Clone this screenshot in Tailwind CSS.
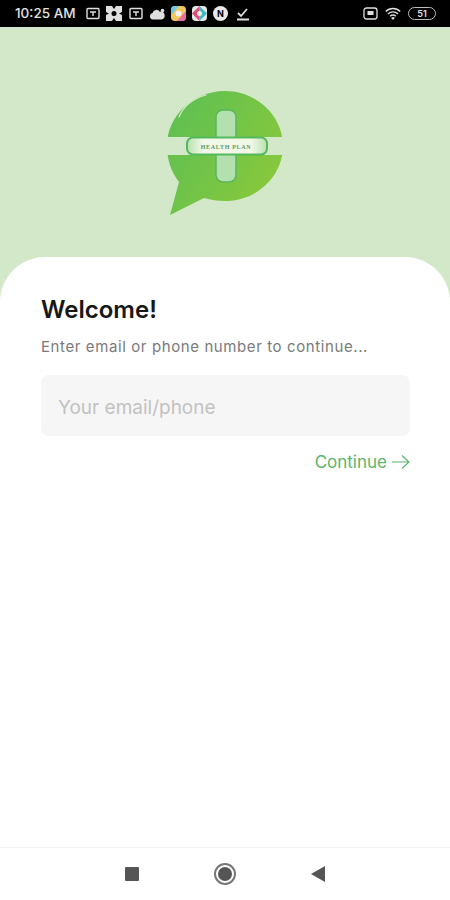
<!DOCTYPE html>
<html lang="en">
<head>
    <meta charset="UTF-8">
    <meta name="viewport" content="width=device-width, initial-scale=1.0">
    <title>Health Plan - Welcome</title>
    <script src="https://cdn.jsdelivr.net/npm/@tailwindcss/browser@4"></script>
</head>
<body class="bg-white font-['Inter',sans-serif]">
<div class="w-[450px] h-[900px] flex flex-col overflow-hidden bg-[#d2e8c8]">

    <!-- status bar -->
    <div class="h-[27px] shrink-0 bg-black text-[#e0e0e0] flex items-center pl-[15px] pr-[14px]">
        <span class="text-[13.5px] leading-none font-medium w-[71px] whitespace-nowrap">10:25 AM</span>
        <div class="flex items-center gap-[6px]">
            <svg class="w-[14px] h-[13px]" viewBox="0 0 14 13" fill="none" stroke="currentColor" stroke-width="1.400"><rect x="1" y="1.500" width="12" height="10" rx="1"/><path d="M4 5h6M7 5v4" /></svg>
            <svg class="w-[16px] h-[15px]" viewBox="0 0 16 15" fill="currentColor"><path d="M0 0h6l2 3 2-3h6v6l-3 1.500 3 1.500v6h-6l-2-3-2 3H0V9l3-1.500L0 6z"/><circle cx="8" cy="7.500" r="2.500" fill="#000"/></svg>
            <svg class="w-[14px] h-[13px] ml-[1px]" viewBox="0 0 14 13" fill="none" stroke="currentColor" stroke-width="1.400"><rect x="1" y="1.500" width="12" height="10" rx="1"/><path d="M4 5h6M7 5v4"/></svg>
            <svg class="w-[16px] h-[12px]" viewBox="0 0 16 12" fill="currentColor"><path d="M4 11.500a3.300 3.300 0 0 1-.5-6.500 4 4 0 0 1 7.300-1.300A3.800 3.800 0 0 1 12.500 11.500z"/><circle cx="13.500" cy="2.500" r="1.800"/></svg>
            <svg class="w-[15px] h-[15px]" viewBox="0 0 15 15"><rect width="15" height="15" rx="4" fill="#f0c95c"/><path d="M0 4a4 4 0 0 1 4-4h4L0 9z" fill="#6fc8ea"/><path d="M15 5v6a4 4 0 0 1-4 4H6z" fill="#e86aa8"/><circle cx="7.500" cy="7.500" r="3" fill="#f6eef6"/></svg>
            <svg class="w-[15px] h-[15px]" viewBox="0 0 15 15"><rect width="15" height="15" rx="4" fill="#e8e8e8"/><path d="M7.500 0L15 7.500 7.500 15z" fill="#3fb8c8"/><path d="M7.500 0L0 7.500 7.500 15z" fill="#e0487c"/><circle cx="7.500" cy="7.500" r="2.500" fill="#f4f0d8"/></svg>
            <span class="w-[15px] h-[15px] rounded-full bg-[#e8e8e8] text-black text-[9px] leading-[15px] font-bold text-center">N</span>
            <svg class="w-[12px] h-[14px] ml-[3px]" viewBox="0 0 12 14" fill="none" stroke="currentColor" stroke-width="1.800"><path d="M1 6l3 3 6-7M0 12.500h12"/></svg>
        </div>
        <div class="ml-auto flex items-center gap-[7px]">
            <svg class="w-[15px] h-[13px]" viewBox="0 0 15 13" fill="none" stroke="currentColor" stroke-width="1.300"><rect x="1" y="1" width="13" height="11" rx="2.500"/><rect x="4.500" y="4" width="6" height="4" fill="currentColor" stroke="none"/></svg>
            <svg class="w-[16px] h-[13px]" viewBox="0 0 16 13" fill="none" stroke="currentColor" stroke-width="1.400"><path d="M.8 4.500a10 10 0 0 1 14.400 0M3 7a7 7 0 0 1 10 0M5.200 9.300a3.800 3.800 0 0 1 5.600 0"/><path d="M8 13l-1.800-2a2.500 2.500 0 0 1 3.600 0z" fill="currentColor" stroke="none"/></svg>
            <span class="w-[28px] h-[13px] rounded-full border border-[#bdbdbd] text-[9px] leading-[11px] font-semibold text-center">51</span>
        </div>
    </div>

    <!-- logo area -->
    <div class="h-[230px] shrink-0 flex items-start justify-center pt-[48px]">
        <svg class="w-[150px] h-[150px]" viewBox="0 0 150 150">
            <defs>
                <linearGradient id="bubble" x1="0" y1="0" x2="1" y2="0.600">
                    <stop offset="0" stop-color="#5abf55"/>
                    <stop offset="1" stop-color="#88c83c"/>
                </linearGradient>
                <linearGradient id="pill" x1="0" y1="0" x2="1" y2="0">
                    <stop offset="0" stop-color="#b8e0b0"/>
                    <stop offset="0.200" stop-color="#f2f8e8"/>
                    <stop offset="0.800" stop-color="#f2f8e8"/>
                    <stop offset="1" stop-color="#b8e0b0"/>
                </linearGradient>
            </defs>
            <path d="M75 16c32 0 58 25 58 55s-26 55-58 55c-7 0-14-1-21-3L20 140l9-33C21 97 17 84 17 71c0-30 26-55 58-55z" fill="url(#bubble)"/>
            <rect x="10" y="62" width="130" height="18" fill="#d2e8c8"/>
            <rect x="66" y="35" width="20" height="72" rx="7" fill="#b4dfae" stroke="#55b95c" stroke-width="1.500"/>
            <rect x="37" y="62.500" width="80" height="17" rx="6" fill="url(#pill)" stroke="#55b95c" stroke-width="2"/>
            <text x="76" y="73.500" text-anchor="middle" font-size="6" font-weight="600" letter-spacing=".7" fill="#5f9a5f" font-family="Liberation Serif, serif">HEALTH PLAN</text>
            <path d="M29 42C33 32 42 24 56 20" fill="none" stroke="#d9f0cc" stroke-width="1.200" stroke-linecap="round"/>
        </svg>
    </div>

    <!-- sign in card -->
    <div class="flex-1 bg-white rounded-t-[45px] px-[41px] pt-[38px]">
        <h1 class="text-[24px] leading-[30px] font-semibold text-[#171717]">Welcome!</h1>
        <p class="mt-[12px] text-[15px] leading-[20px] tracking-[0.6px] text-[#7a7a7a] whitespace-nowrap">Enter email or phone number to continue...</p>
        <input type="text" placeholder="Your email/phone" class="mt-[18px] block w-[369px] h-[61px] rounded-[8px] bg-[#f6f6f6] px-[17px] pt-[3px] text-[19px] placeholder:text-[#c2c2c2] outline-none">
        <div class="mt-[14px] w-[369px] flex items-center justify-end gap-[5px] text-[#5bb56a]">
            <span class="text-[17px] leading-[24px]">Continue</span>
            <svg class="w-[18px] h-[16px]" viewBox="0 0 18 16" fill="none" stroke="currentColor" stroke-width="1.200"><path d="M0 8h17M10 1.500L17 8l-7 6.500"/></svg>
        </div>
    </div>

    <!-- nav bar -->
    <div class="h-[53px] shrink-0 bg-white border-t border-[#f0f0f0] flex items-center justify-between pl-[125px] pr-[125px]">
        <span class="w-[14px] h-[14px] rounded-[1px] bg-[#555555]"></span>
        <span class="w-[22px] h-[22px] rounded-full border-2 border-[#777777] flex items-center justify-center"><span class="w-[14px] h-[14px] rounded-full bg-[#555555]"></span></span>
        <svg class="w-[14px] h-[16px]" viewBox="0 0 14 16"><path d="M14 0v16L0 8z" fill="#555555"/></svg>
    </div>
</div>
</body>
</html>
